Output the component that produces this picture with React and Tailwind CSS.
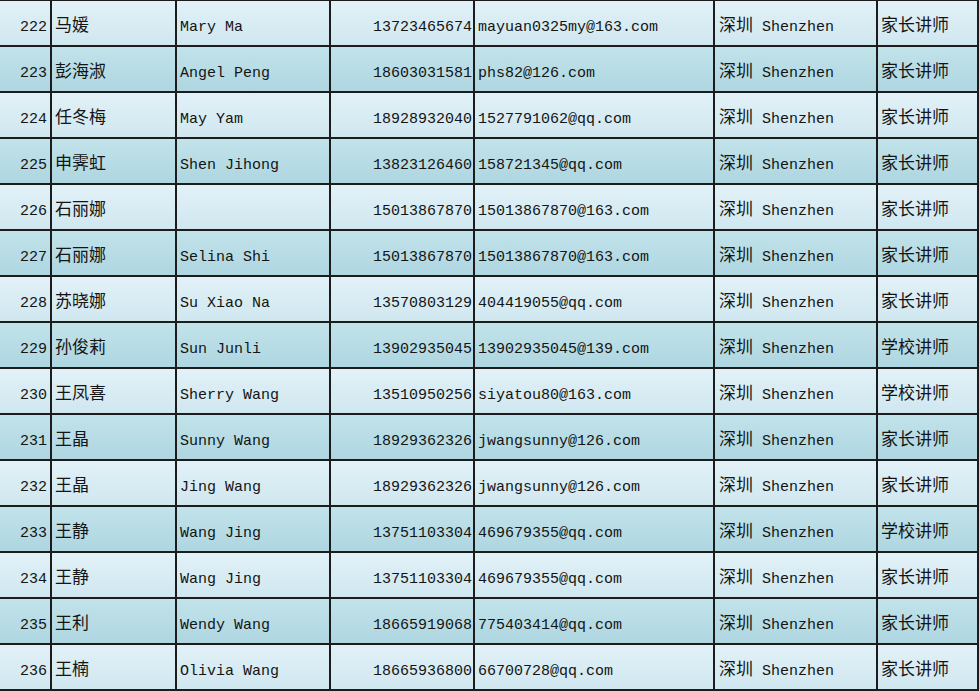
const rows = [
  ['222', '马媛', 'Mary Ma', '13723465674', 'mayuan0325my@163.com', '家长讲师'],
  ['223', '彭海淑', 'Angel Peng', '18603031581', 'phs82@126.com', '家长讲师'],
  ['224', '任冬梅', 'May Yam', '18928932040', '1527791062@qq.com', '家长讲师'],
  ['225', '申霁虹', 'Shen Jihong', '13823126460', '158721345@qq.com', '家长讲师'],
  ['226', '石丽娜', '', '15013867870', '15013867870@163.com', '家长讲师'],
  ['227', '石丽娜', 'Selina Shi', '15013867870', '15013867870@163.com', '家长讲师'],
  ['228', '苏晓娜', 'Su Xiao Na', '13570803129', '404419055@qq.com', '家长讲师'],
  ['229', '孙俊莉', 'Sun Junli', '13902935045', '13902935045@139.com', '学校讲师'],
  ['230', '王凤喜', 'Sherry Wang', '13510950256', 'siyatou80@163.com', '学校讲师'],
  ['231', '王晶', 'Sunny Wang', '18929362326', 'jwangsunny@126.com', '家长讲师'],
  ['232', '王晶', 'Jing Wang', '18929362326', 'jwangsunny@126.com', '家长讲师'],
  ['233', '王静', 'Wang Jing', '13751103304', '469679355@qq.com', '学校讲师'],
  ['234', '王静', 'Wang Jing', '13751103304', '469679355@qq.com', '家长讲师'],
  ['235', '王利', 'Wendy Wang', '18665919068', '775403414@qq.com', '家长讲师'],
  ['236', '王楠', 'Olivia Wang', '18665936800', '66700728@qq.com', '家长讲师'],
]

// SimSun-ish look: mono latin sits a bit lower than the CJK glyphs
const mono = "font-['Liberation_Mono','Noto_Sans_CJK_SC',monospace] text-[15px] leading-[18px] pt-[9px]"
const cjk = "font-['Noto_Sans_CJK_SC',sans-serif] text-[17px] leading-[22px] pt-[1px]"
const cell = 'flex items-center h-full border-r-2 border-[#1c1c1c] whitespace-nowrap overflow-hidden'

const App = () => {
  return (
    <div className="w-[979px] h-[691px] overflow-hidden bg-white border-t border-[#1c1c1c] text-[#141414]">
      {rows.map((row, i) => (
        <div
          key={row[0] + i}
          className={`grid grid-cols-[52px_125px_154px_144px_240px_163px_101px] h-[46px] border-b-2 border-[#1c1c1c] bg-gradient-to-b ${
            i % 2 === 0 ? 'from-[#e2f1f7] to-[#d0e7f0]' : 'from-[#c2e3ea] to-[#aed6e1]'
          }`}
        >
          <div className={`${cell} justify-end pr-[3px]`}><span className={mono}>{row[0]}</span></div>
          <div className={`${cell} pl-[3px]`}><span className={cjk}>{row[1]}</span></div>
          <div className={`${cell} pl-[3px]`}><span className={mono}>{row[2]}</span></div>
          <div className={`${cell} justify-end pr-[1px]`}><span className={mono}>{row[3]}</span></div>
          <div className={`${cell} pl-[3px]`}><span className={mono}>{row[4]}</span></div>
          <div className={`${cell} pl-[4px]`}>
            <span className={cjk}>深圳</span>
            <span className={`${mono} ml-[9px]`}>Shenzhen</span>
          </div>
          <div className={`${cell} pl-[3px]`}><span className={cjk}>{row[5]}</span></div>
        </div>
      ))}
    </div>
  )
}

export default App
